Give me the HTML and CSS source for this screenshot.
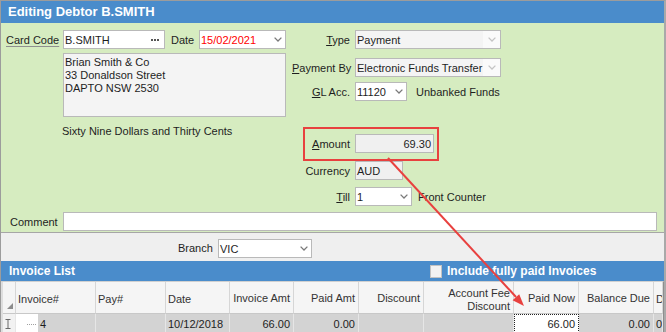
FILE: index.html
```html
<!DOCTYPE html>
<html>
<head>
<meta charset="utf-8">
<title>Editing Debtor B.SMITH</title>
<link rel="stylesheet" href="styles.css">
</head>
<body>
<div class="window">
  <div class="titlebar">Editing Debtor B.SMITH</div>
  <div class="form">
    <div class="cols">
      <div class="left">
        <div class="row">
          <span class="lbl lbl-card"><span class="link">Card Code</span></span>
          <div class="field w-card white"><span class="val">B.SMITH</span><svg class="dots" width="8" height="2" viewBox="0 0 8 2"><rect x="0" y="0" width="2" height="2" fill="#555"/><rect x="3" y="0" width="2" height="2" fill="#555"/><rect x="6" y="0" width="2" height="2" fill="#555"/></svg></div>
          <span class="lbl lbl-date">Date</span>
          <div class="field w-date white"><span class="val red">15/02/2021</span><svg class="chev" width="8" height="5" viewBox="0 0 8 5"><polyline points="0.6,0.6 4,4 7.4,0.6" fill="none" stroke="#7a7a7a" stroke-width="1.3"/></svg></div>
        </div>
        <div class="address">Brian Smith &amp; Co<br>33 Donaldson Street<br>DAPTO NSW 2530</div>
        <div class="words">Sixty Nine Dollars and Thirty Cents</div>
      </div>
      <div class="right">
        <div class="rrow">
          <span class="rlbl"><u>T</u>ype</span>
          <div class="field w-type grey"><span class="val">Payment</span><span class="btn"><svg width="8" height="5" viewBox="0 0 8 5"><polyline points="0.6,0.6 4,4 7.4,0.6" fill="none" stroke="#c4c4c4" stroke-width="1.3"/></svg></span></div>
        </div>
        <div class="rrow mt-pay">
          <span class="rlbl"><u>P</u>ayment By</span>
          <div class="field w-type grey"><span class="val">Electronic Funds Transfer</span><span class="btn"><svg width="8" height="5" viewBox="0 0 8 5"><polyline points="0.6,0.6 4,4 7.4,0.6" fill="none" stroke="#c4c4c4" stroke-width="1.3"/></svg></span></div>
        </div>
        <div class="rrow mt-gl">
          <span class="rlbl"><u>G</u>L Acc.</span>
          <div class="field w-gl white"><span class="val">11120</span><svg class="chev" width="8" height="5" viewBox="0 0 8 5"><polyline points="0.6,0.6 4,4 7.4,0.6" fill="none" stroke="#7a7a7a" stroke-width="1.3"/></svg></div>
          <span class="after after-gl">Unbanked Funds</span>
        </div>
        <div class="amountbox">
          <div class="rrow">
            <span class="rlbl rlbl-amt"><u>A</u>mount</span>
            <div class="field w-amt ro"><span class="val num">69.30</span></div>
          </div>
        </div>
        <div class="rrow">
          <span class="rlbl">Currency</span>
          <div class="field w-cur ro"><span class="val">AUD</span></div>
        </div>
        <div class="rrow mt-till">
          <span class="rlbl"><u>T</u>ill</span>
          <div class="field w-till white"><span class="val">1</span><svg class="chev" width="8" height="5" viewBox="0 0 8 5"><polyline points="0.6,0.6 4,4 7.4,0.6" fill="none" stroke="#7a7a7a" stroke-width="1.3"/></svg></div>
          <span class="after after-till">Front Counter</span>
        </div>
      </div>
    </div>
    <div class="row comment-row">
      <span class="lbl lbl-comment">Comment</span>
      <div class="field w-comment white"></div>
    </div>
  </div>
  <div class="branchbar">
    <span class="lbl-branch">Branch</span>
    <div class="field w-branch white"><span class="val">VIC</span><svg class="chev" width="8" height="5" viewBox="0 0 8 5"><polyline points="0.6,0.6 4,4 7.4,0.6" fill="none" stroke="#7a7a7a" stroke-width="1.3"/></svg></div>
  </div>
  <div class="listbar">
    <span class="listtitle">Invoice List</span>
    <span class="incl"><span class="checkbox"></span>Include fully paid Invoices</span>
  </div>
  <div class="grid">
    <div class="gc rh head"><svg class="sorttri" width="6" height="6" viewBox="0 0 6 6"><polygon points="6,0 6,6 0,6" fill="#8c8c8c"/></svg></div>
    <div class="gc head">Invoice#</div>
    <div class="gc head">Pay#</div>
    <div class="gc head">Date</div>
    <div class="gc head r">Invoice Amt</div>
    <div class="gc head r">Paid Amt</div>
    <div class="gc head r">Discount</div>
    <div class="gc head r two">Account Fee<br>Discount</div>
    <div class="gc head r">Paid Now</div>
    <div class="gc head r">Balance Due</div>
    <div class="gc head">Da</div>

    <div class="gc rh cell rhcell"><svg width="6" height="10" viewBox="0 0 6 10"><path d="M0.5 0.5H5.5M3 0.5V9.5M0.5 9.5H5.5" fill="none" stroke="#6a6a6a" stroke-width="1"/></svg></div>
    <div class="gc cell inv"><span class="invbox"><span class="dotline"></span></span><span>4</span></div>
    <div class="gc cell"></div>
    <div class="gc cell">10/12/2018</div>
    <div class="gc cell r">66.00</div>
    <div class="gc cell r">0.00</div>
    <div class="gc cell r"></div>
    <div class="gc cell r"></div>
    <div class="gc cell r focus">66.00</div>
    <div class="gc cell r">0.00</div>
    <div class="gc cell">09</div>
  </div>
  <svg class="arrow" width="666" height="332" viewBox="0 0 666 332">
    <line x1="388" y1="158" x2="516" y2="297" stroke="#e8413f" stroke-width="2"/>
    <polygon points="524,306 512.6,300.2 519.2,294.2" fill="#e8413f"/>
  </svg>
</div>
</body>
</html>
```

FILE: styles.css
```css
* { box-sizing: border-box; }
html, body { margin: 0; padding: 0; }
body {
  font-family: "Liberation Sans", Arial, sans-serif;
  font-size: 11px;
  color: #1e1e1e;
  background: #ffffff;
}
.window {
  position: relative;
  width: 666px;
  height: 332px;
  overflow: hidden;
  border-top: 1px solid #9c9c9c;
  border-left: 1px solid #9c9c9c;
  border-right: 2px solid #a9a9a9;
  background: #efefef;
}
.titlebar {
  height: 22px;
  line-height: 22px;
  padding-left: 7px;
  background: #4a8ccb;
  color: #ffffff;
  font-weight: bold;
  font-size: 13px;
}
.form {
  background: #d6ecc0;
  padding: 7px 0 1px 5px;
  border-bottom: 1px solid #a6a6a6;
}
.cols { display: flex; column-gap: 6px; }
.left { width: 280px; }
.row { display: flex; align-items: center; height: 19px; }
.lbl { display: inline-block; white-space: nowrap; }
.lbl-card { width: 57px; }
.link { text-decoration: underline; text-decoration-color: #8f8f8f; text-underline-offset: 2px; }
.lbl-date { width: 34px; padding-left: 6px; }
.field {
  height: 19px;
  border: 1px solid #b9b9b9;
  display: flex;
  align-items: center;
  padding-left: 1px;
  white-space: nowrap;
  overflow: hidden;
}
.white { background: #ffffff; }
.grey { background: #f4f4f4; }
.ro { background: #f0f0f0; }
.val { flex: 1; }
.val.num { text-align: right; padding-right: 2px; }
.red { color: #ff0000; }
.dots { margin-right: 5px; }
.chev { margin-right: 3px; flex: none; }
.btn {
  width: 17px;
  height: 17px;
  background: #fafafa;
  display: flex;
  align-items: center;
  justify-content: center;
  flex: none;
}
.w-card { width: 102px; }
.w-date { width: 87px; }
.w-type { width: 146px; }
.w-gl { width: 52px; }
.w-amt { width: 79px; }
.w-cur { width: 48px; }
.w-till { width: 57px; }
.w-comment { width: 594px; }
.w-branch { width: 94px; }
.address {
  margin: 4px 0 0 57px;
  width: 223px;
  height: 64px;
  background: #f4f4f4;
  border: 1px solid #b9b9b9;
  padding: 2px 0 0 1px;
  line-height: 13px;
}
.words {
  margin: 8px 0 0 56px;
  line-height: 13px;
  height: 13px;
  white-space: nowrap;
}
.right { display: flex; flex-direction: column; }
.rrow { display: flex; align-items: center; height: 19px; }
.rlbl { width: 58px; margin-right: 5px; text-align: right; white-space: nowrap; }
.rlbl-amt { width: 45px; }
.mt-pay { margin-top: 9px; }
.mt-gl { margin-top: 5px; }
.mt-till { margin-top: 7px; }
.after { white-space: nowrap; }
.after-gl { margin-left: 9px; }
.after-till { margin-left: 6px; }
.amountbox {
  margin: 26px 0 0 11px;
  width: 136px;
  border: 2px solid #e8413f;
  padding: 5px 3px 6px 0;
}
.comment-row { margin-top: 6px; }
.lbl-comment { width: 57px; padding-left: 4px; }
.branchbar {
  height: 28px;
  padding: 6px 0 0 177px;
  display: flex;
  align-items: flex-start;
}
.lbl-branch { width: 40px; line-height: 19px; }
.listbar {
  height: 20px;
  background: #4a8ccb;
  color: #ffffff;
  font-weight: bold;
  font-size: 12px;
  display: grid;
  grid-template-columns: 429px auto;
  align-items: center;
}
.listtitle { padding-left: 8px; }
.incl { display: flex; align-items: center; white-space: nowrap; }
.checkbox {
  width: 12px;
  height: 13px;
  background: #f2f2f2;
  border: 1px solid #c2c2c2;
  margin-right: 5px;
}
.grid {
  display: grid;
  grid-template-columns: 13px 80px 70px 64px 64px 65px 65px 90px 65px 75px 1fr;
  grid-template-rows: 32px 19px;
  padding-left: 2px;
  background: #dedede;
  border-top: 1px solid #d0d0d0;
  border-right: 1px solid #8e8e8e;
  color: #2a2a2a;
}
.gc {
  display: flex;
  align-items: center;
  white-space: nowrap;
  overflow: hidden;
  padding: 0 2px;
}
.gc.r { justify-content: flex-end; text-align: right; padding: 0 3px 0 2px; }
.head {
  background: #f5f5f5;
  border-right: 1px solid #d6d6d6;
  border-bottom: 1px solid #c8c8c8;
  padding-top: 3px;
  color: #333333;
}
.head.two { line-height: 13px; padding-top: 4px; }
.rh { padding: 0; position: relative; }
.head.rh { align-items: flex-end; justify-content: flex-end; padding: 0 2px 4px 0; }
.cell {
  background: #d3d3d3;
  border-right: 1px solid #e6e6e6;
  color: #1e1e1e;
}
.rhcell { background: #f2f2f2; padding-left: 2px; }
.inv { padding: 0; }
.invbox {
  width: 22px;
  height: 100%;
  background: #ffffff;
  display: flex;
  align-items: center;
  justify-content: flex-end;
  padding-right: 2px;
  margin-right: 2px;
}
.dotline { width: 9px; border-bottom: 1px dotted #a0a0a0; margin-top: 1px; }
.focus { background: #ffffff; border: 1px dotted #222222; padding-right: 2px; }
.arrow { position: absolute; left: -1px; top: -1px; pointer-events: none; }
```
